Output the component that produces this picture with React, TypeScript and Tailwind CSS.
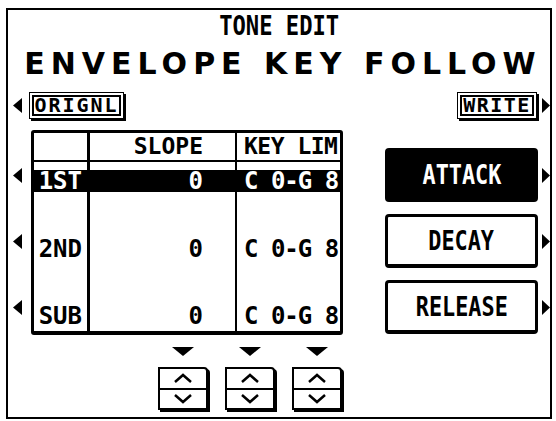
import React from "react";

function LeftTri() {
  return (
    <svg width="9" height="15" viewBox="0 0 9 15" className="block">
      <polygon points="9,0 9,15 0,7.5" fill="#000" />
    </svg>
  );
}

function RightTri() {
  return (
    <svg width="8" height="15" viewBox="0 0 8 15" className="block">
      <polygon points="0,0 0,15 8,7.5" fill="#000" />
    </svg>
  );
}

function DownTri() {
  return (
    <svg width="22" height="9" viewBox="0 0 22 9" className="block">
      <polygon points="0,0 22,0 11,9" fill="#000" />
    </svg>
  );
}

function Spinner() {
  return (
    <div className="w-[50px] h-[43px] border-2 border-black shadow-[2px_2px_0_0_#000] rounded-tr-[4px] flex flex-col bg-white">
      <div className="flex-1 border-b-2 border-black flex items-center justify-center">
        <svg width="20" height="10" viewBox="0 0 20 10" className="block">
          <polyline points="2,9 10,2 18,9" fill="none" stroke="#000" strokeWidth="2.5" />
        </svg>
      </div>
      <div className="flex-1 flex items-center justify-center">
        <svg width="20" height="10" viewBox="0 0 20 10" className="block">
          <polyline points="2,1 10,8 18,1" fill="none" stroke="#000" strokeWidth="2.5" />
        </svg>
      </div>
    </div>
  );
}

export default function App() {
  return (
    <div className="w-[556px] h-[421px] bg-white overflow-hidden pt-[8px] pl-[6px] text-black">
      <div className="w-[546px] h-[411px] border-2 border-black flex flex-col">
        {/* Title */}
        <div className="h-[30px] flex items-center justify-center">
          <span className="inline-block [font-family:'DejaVu_Sans_Mono',monospace] font-bold text-[27px] leading-none scale-x-[0.82]">
            TONE EDIT
          </span>
        </div>
        {/* Heading */}
        <div className="h-[48px] flex items-center justify-center pl-[8px]">
          <span className="[font-family:'DejaVu_Sans',sans-serif] font-bold text-[30px] leading-none tracking-[6px]">
            ENVELOPE KEY FOLLOW
          </span>
        </div>
        {/* Toolbar */}
        <div className="h-[34px] flex items-center">
          <div className="ml-[5px]">
            <LeftTri />
          </div>
          <div className="ml-[7px] w-[95px] h-[27px] border border-black shadow-[2px_2px_0_0_#000] p-[2px]">
            <div className="w-full h-full border-2 border-black flex items-center justify-center">
              <span className="[font-family:'DejaVu_Sans_Mono',monospace] font-bold text-[20px] leading-none tracking-[2px]">
                ORIGNL
              </span>
            </div>
          </div>
          <div className="flex-1" />
          <div className="w-[80px] h-[27px] border border-black shadow-[2px_2px_0_0_#000] p-[2px]">
            <div className="w-full h-full border-2 border-black flex items-center justify-center">
              <span className="[font-family:'DejaVu_Sans_Mono',monospace] font-bold text-[20px] leading-none tracking-[1.5px]">
                WRITE
              </span>
            </div>
          </div>
          <div className="ml-[5px]">
            <RightTri />
          </div>
        </div>

        {/* Main */}
        <div className="mt-[8px] flex">
          {/* left arrows */}
          <div className="ml-[5px] w-[9px] pt-[18px] flex flex-col gap-[12px]">
            <div className="h-[54px] flex items-center"><LeftTri /></div>
            <div className="h-[54px] flex items-center"><LeftTri /></div>
            <div className="h-[54px] flex items-center"><LeftTri /></div>
          </div>

          {/* table + spinners */}
          <div className="ml-[9px] w-[312px] flex flex-col">
            <div className="h-[205px] border-[3px] border-b-[4px] border-black rounded-[3px] flex [font-family:'DejaVu_Sans_Mono',monospace] font-bold leading-none">
              {/* col 1 */}
              <div className="w-[56px] border-r-[3px] border-black flex flex-col text-[24px]">
                <div className="h-[29px] border-b-2 border-black" />
                <div className="h-[22px] mt-[8px] bg-black text-white flex items-center justify-end pr-[5px]">1ST</div>
                <div className="h-[22px] mt-[46px] flex items-center justify-end pr-[5px]">2ND</div>
                <div className="h-[22px] mt-[45px] flex items-center justify-end pr-[5px]">SUB</div>
              </div>
              {/* col 2 */}
              <div className="w-[147px] border-r-2 border-black flex flex-col text-[24px]">
                <div className="h-[29px] border-b-2 border-black flex items-center justify-end pr-[32px] text-[23px]">SLOPE</div>
                <div className="h-[22px] mt-[8px] bg-black text-white flex items-center justify-end pr-[32px]">0</div>
                <div className="h-[22px] mt-[46px] flex items-center justify-end pr-[32px]">0</div>
                <div className="h-[22px] mt-[45px] flex items-center justify-end pr-[32px]">0</div>
              </div>
              {/* col 3 */}
              <div className="flex-1 flex flex-col text-[24px]">
                <div className="h-[29px] border-b-2 border-black flex items-center pl-[7px] text-[23px] tracking-[-0.5px] whitespace-pre">KEY LIM</div>
                <div className="h-[22px] mt-[8px] bg-black text-white flex items-center pl-[7px] tracking-[-1px] whitespace-pre">C 0-G 8</div>
                <div className="h-[22px] mt-[46px] flex items-center pl-[7px] tracking-[-1px] whitespace-pre">C 0-G 8</div>
                <div className="h-[22px] mt-[45px] flex items-center pl-[7px] tracking-[-1px] whitespace-pre">C 0-G 8</div>
              </div>
            </div>

            <div className="ml-[127px] flex gap-[17px]">
              {[0, 1, 2].map((i) => (
                <div key={i} className="w-[50px] flex flex-col items-center">
                  <div className="mt-[12px]">
                    <DownTri />
                  </div>
                  <div className="mt-[11px]">
                    <Spinner />
                  </div>
                </div>
              ))}
            </div>
          </div>

          {/* buttons */}
          <div className="ml-[42px] w-[153px] pt-[18px] flex flex-col gap-[12px] [font-family:'DejaVu_Sans_Mono',monospace] font-bold">
            <div className="h-[54px] bg-black text-white rounded-[4px] flex items-center justify-center">
              <span className="inline-block text-[26px] leading-none scale-x-[0.84]">ATTACK</span>
            </div>
            <div className="h-[54px] bg-white border-[3px] border-b-[4px] border-black rounded-[4px] flex items-center justify-center">
              <span className="inline-block text-[26px] leading-none scale-x-[0.84]">DECAY</span>
            </div>
            <div className="h-[54px] bg-white border-[3px] border-b-[4px] border-black rounded-[4px] flex items-center justify-center">
              <span className="inline-block text-[26px] leading-none scale-x-[0.84]">RELEASE</span>
            </div>
          </div>

          {/* right arrows */}
          <div className="ml-[4px] w-[8px] pt-[18px] flex flex-col gap-[12px]">
            <div className="h-[54px] flex items-center"><RightTri /></div>
            <div className="h-[54px] flex items-center"><RightTri /></div>
            <div className="h-[54px] flex items-center"><RightTri /></div>
          </div>
        </div>
      </div>
    </div>
  );
}
